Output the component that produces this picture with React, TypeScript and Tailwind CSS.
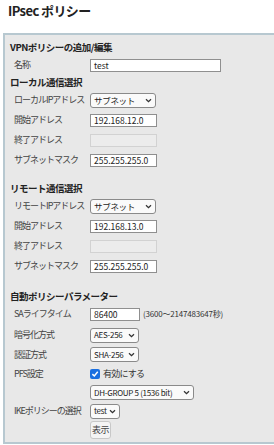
import React from "react";

const F = "font-['Noto_Sans_CJK_JP','Noto_Sans',sans-serif]";

function Chevron() {
  return (
    <svg width="7" height="5" viewBox="0 0 7 5" className="shrink-0">
      <path d="M1 1.2 L3.5 3.6 L6 1.2" fill="none" stroke="#333" strokeWidth="1.3" />
    </svg>
  );
}

function Select({ w, text, small }: { w: string; text: string; small?: boolean }) {
  return (
    <div
      className={`${w} h-[15px] flex items-center justify-between pl-[3px] pr-[3px] bg-[#fafafa] border border-[#8a8a8a] rounded-[3px] ${
        small ? "text-[8px]" : "text-[8.5px]"
      } text-[#222]`}
    >
      <span className="tracking-[-0.3px] whitespace-nowrap">{text}</span>
      <Chevron />
    </div>
  );
}

function Input({ w, text, disabled }: { w: string; text?: string; disabled?: boolean }) {
  return (
    <div
      className={`${w} h-[13px] flex items-center pl-[3px] text-[8.5px] text-[#222] border ${
        disabled ? "bg-[#ececec] border-[#d2d2d2]" : "bg-white border-[#8f8f8f]"
      }`}
    >
      {text}
    </div>
  );
}

function Row({ h, label, children }: { h: string; label: string; children?: React.ReactNode }) {
  return (
    <div className={`${h} flex items-center`}>
      <div className="w-[80px] pl-[4px] text-[9px] tracking-[-1px] text-[#444] whitespace-nowrap">{label}</div>
      <div className="flex items-center">{children}</div>
    </div>
  );
}

function Heading({ h, text, mt }: { h: string; text: string; mt?: string }) {
  return (
    <div className={`${h} ${mt ?? ""} flex items-center text-[9.5px] font-bold tracking-[-0.5px] text-[#222]`}>
      {text}
    </div>
  );
}

export default function App() {
  return (
    <div className={`w-[274px] h-[445px] bg-white overflow-hidden ${F} text-[#333]`}>
      <div className="h-[33px] pl-[8px] pt-[1px] text-[13px] font-bold tracking-[-0.6px] text-[#222]">
        IPsec ポリシー
      </div>
      <div className="ml-[3px] h-[411px] bg-[#e8e8e8] border-l-2 border-t-2 border-b-2 border-[#b7c8d0] pl-[5px] pt-[2px]">
        <Heading h="h-[20px]" text="VPNポリシーの追加/編集" />
        <Row h="h-[16px]" label="名称">
          <Input w="w-[131px]" text="test" />
        </Row>
        <Heading h="h-[18px]" text="ローカル通信選択" />
        <Row h="h-[18px]" label="ローカルIPアドレス">
          <Select w="w-[66px]" text="サブネット" />
        </Row>
        <div className="h-[1px]" />
        <Row h="h-[20px]" label="開始アドレス">
          <Input w="w-[67px]" text="192.168.12.0" />
        </Row>
        <Row h="h-[20px]" label="終了アドレス">
          <Input w="w-[67px]" disabled />
        </Row>
        <Row h="h-[20px]" label="サブネットマスク">
          <Input w="w-[67px]" text="255.255.255.0" />
        </Row>
        <Heading h="h-[17px]" mt="mt-[10px]" text="リモート通信選択" />
        <Row h="h-[18px]" label="リモートIPアドレス">
          <Select w="w-[66px]" text="サブネット" />
        </Row>
        <div className="h-[1px]" />
        <Row h="h-[20px]" label="開始アドレス">
          <Input w="w-[67px]" text="192.168.13.0" />
        </Row>
        <Row h="h-[20px]" label="終了アドレス">
          <Input w="w-[67px]" disabled />
        </Row>
        <Row h="h-[20px]" label="サブネットマスク">
          <Input w="w-[67px]" text="255.255.255.0" />
        </Row>
        <Heading h="h-[18px]" mt="mt-[11px]" text="自動ポリシーパラメーター" />
        <Row h="h-[18px]" label="SAライフタイム">
          <Input w="w-[50px]" text="86400" />
          <span className="ml-[3px] text-[8px] tracking-[-0.2px] text-[#333]">(3600～2147483647秒)</span>
        </Row>
        <div className="h-[2px]" />
        <Row h="h-[20px]" label="暗号化方式">
          <Select w="w-[49px]" text="AES-256" small />
        </Row>
        <Row h="h-[19px]" label="認証方式">
          <Select w="w-[49px]" text="SHA-256" small />
        </Row>
        <Row h="h-[19px]" label="PFS設定">
          <div className="w-[10px] h-[10px] rounded-[2px] bg-[#1a6fe0] flex items-center justify-center">
            <svg width="8" height="8" viewBox="0 0 7 7">
              <path d="M1.2 3.6 L2.9 5.2 L5.9 1.6" fill="none" stroke="white" strokeWidth="1.3" />
            </svg>
          </div>
          <span className="ml-[3px] text-[9px] tracking-[-0.8px] text-[#333]">有効にする</span>
        </Row>
        <Row h="h-[19px]" label="">
          <Select w="w-[104px]" text="DH-GROUP 5 (1536 bit)" small />
        </Row>
        <Row h="h-[18px]" label="IKEポリシーの選択">
          <Select w="w-[30px]" text="test" small />
        </Row>
        <Row h="h-[20px]" label="">
          <div className="w-[21px] h-[18px] flex items-center justify-center bg-[#f4f4f4] border border-[#c8c8c8] rounded-[3px] text-[9px] tracking-[-0.5px] text-[#444]">
            表示
          </div>
        </Row>
      </div>
    </div>
  );
}
